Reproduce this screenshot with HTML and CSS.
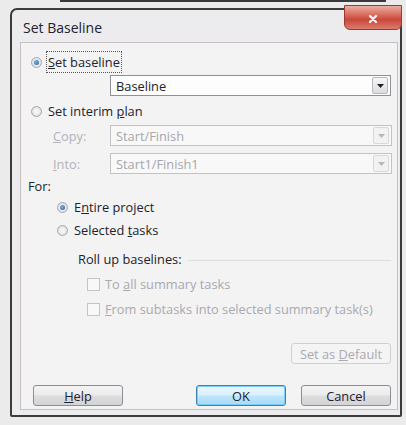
FILE: index.html
```html
<!DOCTYPE html>
<html>
<head>
<meta charset="utf-8">
<title>Set Baseline</title>
<link rel="stylesheet" href="styles.css">
</head>
<body>
<div class="edge"></div>
<div class="window">
  <div class="titlebar">
    <span class="title">Set Baseline</span>
    <button class="close" aria-label="Close">
      <svg width="12" height="10" viewBox="0 0 12 10"><path d="M3 2 L9 8 M9 2 L3 8" stroke="#fbeeee" stroke-width="2.4" stroke-linecap="round"/></svg>
    </button>
  </div>
  <div class="panel">
    <div class="row radio-row">
      <span class="radio checked"></span>
      <span class="label focus"><u>S</u>et baseline</span>
    </div>
    <div class="combo main">
      <span class="value">Baseline</span>
      <span class="arrow"><svg width="7" height="4" viewBox="0 0 7 4"><path d="M0 0 H7 L3.5 4 Z" fill="#222"/></svg></span>
    </div>
    <div class="row radio-row interim">
      <span class="radio"></span>
      <span class="label">Set interim <u>p</u>lan</span>
    </div>
    <div class="field">
      <span class="flabel"><u>C</u>opy:</span>
      <div class="combo disabled">
        <span class="value">Start/Finish</span>
        <span class="arrow"><svg width="7" height="4" viewBox="0 0 7 4"><path d="M0 0 H7 L3.5 4 Z" fill="#b8b8b8"/></svg></span>
      </div>
    </div>
    <div class="field">
      <span class="flabel"><u>I</u>nto:</span>
      <div class="combo disabled">
        <span class="value">Start1/Finish1</span>
        <span class="arrow"><svg width="7" height="4" viewBox="0 0 7 4"><path d="M0 0 H7 L3.5 4 Z" fill="#b8b8b8"/></svg></span>
      </div>
    </div>
    <div class="for">For:</div>
    <div class="row radio-row sub">
      <span class="radio checked"></span>
      <span class="label">E<u>n</u>tire project</span>
    </div>
    <div class="row radio-row sub second">
      <span class="radio"></span>
      <span class="label">Selected <u>t</u>asks</span>
    </div>
    <div class="rollup">
      <span>Roll up baselines:</span>
      <span class="rule"></span>
    </div>
    <div class="row check-row">
      <span class="check"></span>
      <span class="label dim">To <u>a</u>ll summary tasks</span>
    </div>
    <div class="row check-row">
      <span class="check"></span>
      <span class="label dim"><u>F</u>rom subtasks into selected summary task(s)</span>
    </div>
    <div class="default-row">
      <button class="btn disabled-btn">Set as <u>D</u>efault</button>
    </div>
    <div class="buttons">
      <button class="btn help"><u>H</u>elp</button>
      <div class="right">
        <button class="btn ok">OK</button>
        <button class="btn">Cancel</button>
      </div>
    </div>
  </div>
</div>
</body>
</html>
```
FILE: styles.css
```css
html, body {
  margin: 0;
  padding: 0;
}

body {
  width: 406px;
  height: 425px;
  overflow: hidden;
  background: #ebebeb;
  font-family: "Open Sans", "Noto Sans", sans-serif;
  font-size: 12.8px;
  color: #22222c;
  position: relative;
}

.edge {
  height: 3px;
  margin: 0 20px 0 60px;
  border-top: 2px solid #3a3a3a;
}

.window {
  position: relative;
  margin: 3px 4px 0 10px;
  height: 409px;
  border: 2px solid #3c3c3c;
  border-radius: 7px 7px 2px 2px;
  background: #ececee;
  box-sizing: border-box;
  display: flex;
  flex-direction: column;
}

.titlebar {
  height: 32px;
  display: flex;
  align-items: center;
  padding-left: 11px;
  flex: none;
}

.title {
  font-size: 14px;
  color: #22222c;
  margin-top: 2px;
}

.close {
  position: absolute;
  top: -5px;
  right: -2px;
  width: 58px;
  height: 25px;
  border: 1px solid #9a3a32;
  border-radius: 0 0 6px 6px;
  background: linear-gradient(#eab0a4, #d8685a 40%, #c8483a 60%, #dc7c6c);
  display: flex;
  align-items: center;
  justify-content: center;
  padding: 0;
  padding-top: 3px;
}

.panel {
  flex: 1;
  margin: 0 2px 5px 8px;
  border: 1px solid #c8bfc4;
  background: #f3f3f4;
  padding: 10px 2px 0 10px;
  display: flex;
  flex-direction: column;
}

.row {
  display: flex;
  align-items: center;
  height: 18px;
  white-space: nowrap;
}

.radio {
  width: 11px;
  height: 11px;
  border-radius: 50%;
  border: 1px solid #a4a8b0;
  background: radial-gradient(circle, #f4f4f4 30%, #cfd1d6);
  box-sizing: border-box;
  flex: none;
  display: flex;
  align-items: center;
  justify-content: center;
}

.radio.checked::after {
  content: "";
  width: 5px;
  height: 5px;
  border-radius: 50%;
  background: radial-gradient(circle at 40% 40%, #7fb4e4, #1f5a96);
}

.radio-row .label {
  margin-left: 6px;
}

.label.focus {
  outline: 1px dotted #555;
  padding: 1px 1px;
  margin-left: 5px;
}

.combo {
  display: flex;
  align-items: center;
  height: 21px;
  border: 1px solid #8f8f96;
  background: #fdfdfd;
  box-sizing: border-box;
}

.combo .value {
  flex: 1;
  padding-left: 5px;
}

.combo .arrow {
  width: 14px;
  height: 15px;
  margin-right: 2px;
  border: 1px solid #b8b8c0;
  border-radius: 2px;
  background: linear-gradient(#f6f6f6, #dcdcde);
  display: flex;
  align-items: center;
  justify-content: center;
}

.combo.main {
  margin: 4px 4px 0 79px;
}

.combo.disabled {
  flex: 1;
  border-color: #c2c2c8;
  background: #f8f8f9;
  color: #a6a6ac;
}

.combo.disabled .arrow {
  border-color: #d8d8dc;
  background: #f2f2f3;
}

.interim {
  margin-top: 6px;
}

.field {
  display: flex;
  align-items: center;
  margin: 5px 3px 0 22px;
  height: 21px;
}

.field + .field {
  margin-top: 7px;
}

.flabel {
  width: 57px;
  color: #b2b2b8;
}

.for {
  margin: 3px 0 0 -3px;
  height: 18px;
  line-height: 18px;
}

.sub {
  margin: 3px 0 0 26px;
}

.sub.second {
  margin-top: 5px;
}

.rollup {
  display: flex;
  align-items: center;
  margin: 11px 4px 0 47px;
  height: 18px;
}

.rollup .rule {
  flex: 1;
  height: 1px;
  margin-left: 6px;
  margin-top: 3px;
  background: #dcdcdf;
}

.check-row {
  margin: 7px 0 0 56px;
}

.check-row + .check-row {
  margin-top: 7px;
}

.check {
  width: 13px;
  height: 13px;
  border: 1px solid #c4c4ca;
  background: #f8f8f9;
  box-sizing: border-box;
  flex: none;
}

.label.dim {
  margin-left: 5px;
  color: #a9a9b0;
}

.default-row {
  display: flex;
  justify-content: flex-end;
  margin: 25px 4px 0 0;
}

.btn {
  font-family: inherit;
  font-size: 12.8px;
  height: 21px;
  width: 90px;
  padding: 0;
  border: 1px solid #8c8c94;
  border-radius: 3px;
  background: linear-gradient(#f4f4f4 0%, #ebebeb 48%, #dddddf 52%, #d4d4d6 100%);
  color: #22222c;
  box-sizing: border-box;
}

.btn.disabled-btn {
  width: 100px;
  border-color: #cfcfd4;
  background: #f4f4f5;
  color: #a9a9b0;
}

.buttons {
  display: flex;
  justify-content: space-between;
  margin: 21px 4px 0 2px;
}

.buttons .right {
  display: flex;
  gap: 15px;
}

.btn.ok {
  border-color: #3c7fb1;
  box-shadow: inset 0 0 0 1px #7ad0f6;
  background: linear-gradient(#eaf6fc 0%, #d9f0fc 48%, #bee6fd 52%, #a7d9f5 100%);
}
```
